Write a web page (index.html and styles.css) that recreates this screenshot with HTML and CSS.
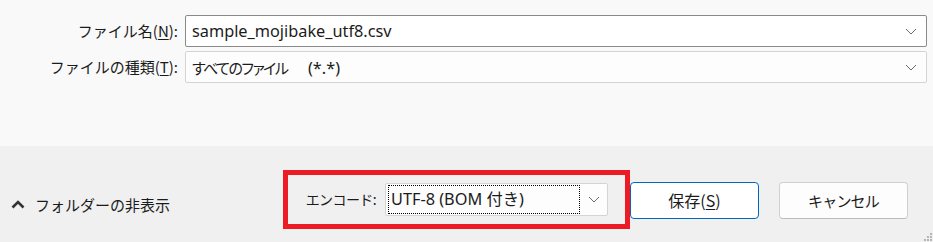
FILE: index.html
```html
<!DOCTYPE html>
<html lang="ja">

<head>
    <meta charset="UTF-8">
    <title>名前を付けて保存</title>
    <link rel="stylesheet" href="styles.css">
</head>

<body>

    <section class="fields">
        <label class="label">ファイル名(<u>N</u>):</label>
        <div class="combo combo-active">
            <span>sample_mojibake_utf8.csv</span>
            <svg class="chev" width="12" height="7" viewBox="0 0 12 7"><path d="M1 1 L6 6 L11 1" /></svg>
        </div>

        <label class="label">ファイルの種類(<u>T</u>):</label>
        <div class="combo">
            <span><span class="jp">すべてのファイル</span>&#12288; (*.*)</span>
            <svg class="chev" width="12" height="7" viewBox="0 0 12 7"><path d="M1 1 L6 6 L11 1" /></svg>
        </div>
    </section>

    <footer class="bar">
        <button class="toggle">
            <svg width="14" height="9" viewBox="0 0 14 9"><path d="M1.5 7.5 L7 2 L12.5 7.5" /></svg>
            <span>フォルダーの非表示</span>
        </button>

        <div class="encode">
            <span class="encode-label">エンコード:</span>
            <div class="encode-combo">
                <span class="focus">UTF-8 (BOM 付き)</span>
                <svg class="chev" width="12" height="7" viewBox="0 0 12 7"><path d="M1 1 L6 6 L11 1" /></svg>
            </div>
        </div>

        <button class="btn btn-primary">保存(<u>S</u>)</button>
        <button class="btn btn-cancel">キャンセル</button>

        <div class="grip">
            <i></i><i></i><i></i><i></i><i></i><i></i>
        </div>
    </footer>

</body></html>
```

FILE: styles.css
```css
* {
    margin: 0px;
    padding: 0px;
    box-sizing: border-box;
}

body {
    width: 933px;
    height: 242px;
    overflow: hidden;
    font-family: "Segoe UI", "Noto Sans", "Noto Sans CJK JP", sans-serif;
    font-size: 15px;
    color: #1b1b1b;
    background: #f0f0f0;
}

u {
    text-decoration-thickness: 1px;
    text-underline-offset: 2px;
}

/* upper part */

.fields {
    height: 146px;
    background: #f9f9f9;
    padding: 15px 6px 0 0;
    display: grid;
    grid-template-columns: 178px 1fr;
    grid-column-gap: 7px;
    grid-row-gap: 4px;
    grid-auto-rows: 32px;
    align-items: center;
}

.label {
    text-align: right;
    font-family: "Noto Sans CJK JP", sans-serif;
    font-size: 15px;
    line-height: 32px;
}

.combo {
    height: 32px;
    display: flex;
    align-items: center;
    justify-content: space-between;
    padding: 0 9px 0 6px;
    background: #fdfdfd;
    border: 1px solid #d4d4d4;
    border-radius: 2px;
    font-family: "Noto Sans", "Noto Sans CJK JP", sans-serif;
    font-size: 16.3px;
}

.combo .jp {
    font-family: "Noto Sans CJK JP", sans-serif;
    font-size: 15px;
    letter-spacing: -1.5px;
    font-feature-settings: "palt";
}

.combo-active {
    background: #ffffff;
    border-color: #8a8a8a;
}

.chev path {
    fill: none;
    stroke: #6b6b6b;
    stroke-width: 1;
}

/* lower bar */

.bar {
    height: 96px;
    display: flex;
    align-items: center;
    padding-top: 12px;
    position: relative;
}

.toggle {
    display: flex;
    align-items: center;
    gap: 10px;
    margin-left: 11px;
    width: 272px;
    border: none;
    background: none;
    font-family: "Noto Sans CJK JP", sans-serif;
    font-size: 15px;
    color: #1b1b1b;
    padding-top: 8px;
}

.toggle path {
    fill: none;
    stroke: #333;
    stroke-width: 2.6;
}

.encode {
    width: 347px;
    height: 59px;
    border: 5px solid #ed1c24;
    display: flex;
    align-items: center;
    justify-content: flex-end;
    padding-right: 17px;
    gap: 9px;
    margin-top: -2px;
}

.encode-label {
    font-family: "Noto Sans CJK JP", sans-serif;
    font-size: 14px;
    letter-spacing: -0.6px;
}

.encode-combo {
    width: 223px;
    height: 33px;
    display: flex;
    align-items: center;
    justify-content: space-between;
    padding: 0 7px 0 2px;
    background: #fdfdfd;
    border: 1px solid #d4d4d4;
    border-radius: 2px;
}

.focus {
    width: 192px;
    height: 29px;
    line-height: 27px;
    padding-left: 2px;
    border: 1px dotted #000;
    font-family: "Noto Sans", "Noto Sans CJK JP", sans-serif;
    font-size: 16.3px;
}

.btn {
    width: 129px;
    height: 37px;
    background: #fdfdfd;
    border: 1px solid #d0d0d0;
    border-bottom-color: #bcbcbc;
    border-radius: 4px;
    font-family: "Noto Sans CJK JP", sans-serif;
    font-size: 16px;
    color: #1b1b1b;
    margin-left: 20px;
}

.btn-primary {
    margin-left: 0;
    background: #ffffff;
    border: 1px solid #0067c0;
}

.btn-cancel {
    font-size: 15px;
    letter-spacing: -0.8px;
}

.grip {
    position: absolute;
    right: 1px;
    bottom: 1px;
    width: 8px;
    height: 8px;
    display: grid;
    grid-template-columns: repeat(3, 2px);
    grid-gap: 1px;
}

.grip i {
    width: 2px;
    height: 2px;
    background: #b5b5b5;
}

.grip i:nth-child(1) {
    grid-column: 3;
}

.grip i:nth-child(2) {
    grid-column: 2;
}
```
